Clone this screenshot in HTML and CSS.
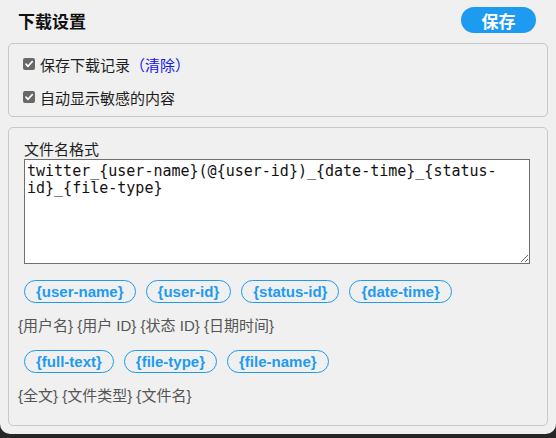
FILE: index.html
```html
<!DOCTYPE html>
<html lang="zh-CN">
<head>
    <meta charset="UTF-8">
    <title>下载设置</title>
    <link rel="stylesheet" href="styles.css">
</head>
<body>
    <div class="panel">
        <div class="panel-head">
            <h2 class="panel-title">下载设置</h2>
            <button class="save-button">保存</button>
        </div>

        <div class="group options">
            <label class="check-row">
                <span class="check-box"><svg width="12" height="12" viewBox="0 0 12 12"><path d="M3 6.2 L5 8.3 L9.2 3.6" fill="none" stroke="#fff" stroke-width="1.7" stroke-linecap="round" stroke-linejoin="round"/></svg></span>
                保存下载记录<a class="clear-link" href="#">（清除）</a>
            </label>
            <label class="check-row">
                <span class="check-box"><svg width="12" height="12" viewBox="0 0 12 12"><path d="M3 6.2 L5 8.3 L9.2 3.6" fill="none" stroke="#fff" stroke-width="1.7" stroke-linecap="round" stroke-linejoin="round"/></svg></span>
                自动显示敏感的内容
            </label>
        </div>

        <div class="group format">
            <div class="format-title">文件名格式</div>
            <textarea class="format-input" spellcheck="false">twitter_{user-name}(@{user-id})_{date-time}_{status-id}_{file-type}</textarea>

            <div class="chips">
                <span class="chip">{user-name}</span>
                <span class="chip">{user-id}</span>
                <span class="chip">{status-id}</span>
                <span class="chip">{date-time}</span>
            </div>
            <p class="hint">{用户名} {用户 ID} {状态 ID} {日期时间}</p>

            <div class="chips">
                <span class="chip">{full-text}</span>
                <span class="chip">{file-type}</span>
                <span class="chip">{file-name}</span>
            </div>
            <p class="hint">{全文} {文件类型} {文件名}</p>
        </div>
    </div>
</body>
</html>
```

FILE: styles.css
```css
body {
    margin: 0;
    padding: 0;
    background-color: #262626;
    font-family: "Liberation Sans", "Noto Sans CJK SC", sans-serif;
    color: #1e1e1e;
}

.panel {
    height: 434px;
    padding: 0 8px;
    box-sizing: border-box;
    background-color: #f0f0f0;
    border-radius: 0 0 10px 10px;
    overflow: hidden;
}

.panel-head {
    display: flex;
    justify-content: space-between;
    align-items: center;
    padding: 7px 12px 0 10px;
}

.panel-title {
    margin: 0;
    font-size: 17px;
    font-weight: bold;
    color: #111;
}

.save-button {
    width: 75px;
    height: 26px;
    border: none;
    border-radius: 13px;
    background-color: #1d9bf0;
    color: white;
    font-family: inherit;
    font-size: 17px;
    font-weight: bold;
    padding: 0;
    cursor: pointer;
}

/* boxed groups */
.group {
    margin-top: 10px;
    border: 1px solid #c8c8c8;
    border-radius: 5px;
}

.options {
    display: flex;
    flex-direction: column;
    gap: 13px;
    padding: 10px 14px 9px;
}

.check-row {
    display: flex;
    align-items: center;
    height: 20px;
    font-size: 15px;
    color: #1e1e1e;
}

.check-box {
    display: flex;
    width: 12px;
    height: 12px;
    margin-right: 5px;
    border-radius: 2px;
    background-color: #686868;
}

.clear-link {
    color: #1515f0;
    text-decoration: none;
}

.format {
    padding: 13px 17px 19px 9px;
}

.format-title {
    margin-left: 6px;
    font-size: 15px;
    line-height: 18px;
}

.format-input {
    display: block;
    width: 506px;
    height: 105px;
    margin: 0 0 0 6px;
    padding: 3px 2px;
    box-sizing: border-box;
    border: 1px solid #6f6f6f;
    border-radius: 0;
    background: white;
    font-family: "DejaVu Sans Mono", monospace;
    font-size: 15px;
    line-height: 17px;
    color: #111;
    resize: vertical;
}

.chips {
    display: flex;
    gap: 10px;
    margin: 16px 0 0 6px;
}

.format .hint + .chips {
    margin-top: 14px;
}

.chip {
    padding: 0 11px;
    border: 1px solid #1d9bf0;
    border-radius: 12px;
    color: #1d9bf0;
    font-size: 15px;
    font-weight: bold;
    line-height: 21px;
}

.hint {
    margin: 13px 0 0;
    font-size: 15px;
    line-height: 20px;
    color: #555;
}
```
